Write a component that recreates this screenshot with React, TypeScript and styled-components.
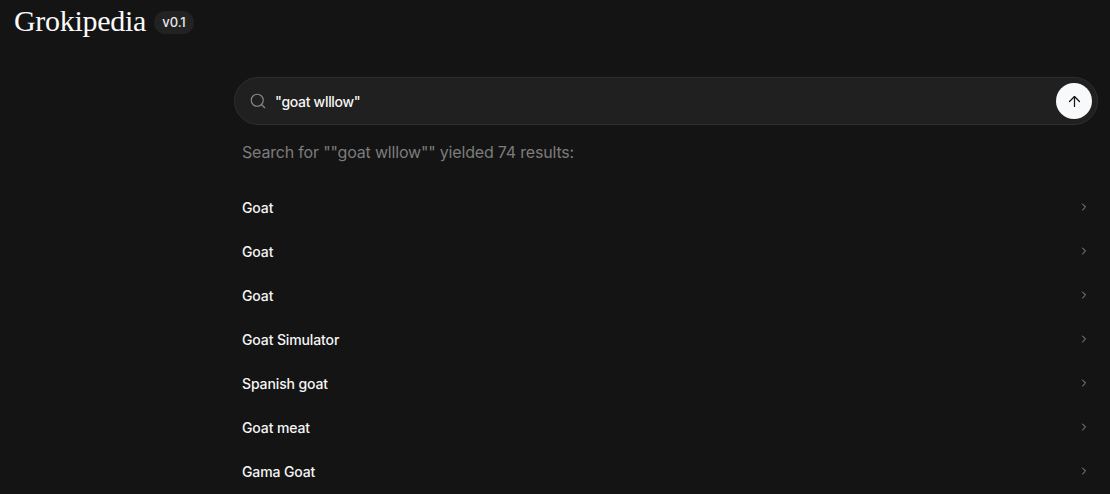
import React from "react";
import styled, { createGlobalStyle } from "styled-components";
import { ArrowUp, ChevronRight, Search } from "lucide-react";

const Global = createGlobalStyle`
  html, body { margin: 0; padding: 0; background: #141414; height: 494px; overflow: hidden; }
  * { box-sizing: border-box; }
`;

const Page = styled.div`
  width: 1110px;
  height: 494px;
  overflow: hidden;
  background: #141414;
  color: #fafafa;
  font-family: Inter, "Liberation Sans", sans-serif;
`;

const Header = styled.header`
  display: flex;
  align-items: center;
  gap: 8px;
  height: 44px;
  padding-left: 14px;
`;

const Logo = styled.h1`
  margin: -2px 0 0;
  font-family: "Liberation Serif", serif;
  font-weight: 400;
  font-size: 30px;
  letter-spacing: -0.3px;
  line-height: 44px;
  color: #fafafa;
`;

const Version = styled.span`
  display: flex;
  align-items: center;
  justify-content: center;
  width: 40px;
  height: 23px;
  border-radius: 12px;
  background: #222222;
  font-size: 13px;
  font-weight: 500;
  letter-spacing: -0.1px;
  color: #e8e8e8;
`;

const Main = styled.main`
  width: 864px;
  margin: 33px 0 0 234px;
`;

const SearchBar = styled.div`
  display: flex;
  align-items: center;
  height: 48px;
  padding: 0 5px 0 14px;
  border: 1px solid #2e2e2e;
  border-radius: 24px;
  background: #202020;
`;

const SearchIcon = styled(Search)`
  flex: none;
  color: #8a8a8a;
`;

const Query = styled.span`
  flex: 1;
  margin-left: 8px;
  font-size: 14px;
  font-weight: 500;
  letter-spacing: -0.3px;
  color: #f5f5f5;
`;

const Submit = styled.button`
  display: flex;
  align-items: center;
  justify-content: center;
  width: 36px;
  height: 36px;
  padding: 0;
  border: none;
  border-radius: 50%;
  background: #f8f9fb;
  color: #141414;
`;

const Summary = styled.p`
  margin: 15px 0 0 8px;
  font-size: 16px;
  letter-spacing: -0.18px;
  line-height: 24px;
  color: #7c7c7c;
`;

const Results = styled.ul`
  list-style: none;
  margin: 21px 0 0;
  padding: 0;
`;

const Result = styled.li`
  display: flex;
  align-items: center;
  justify-content: space-between;
  height: 44px;
  padding: 0 8px;
  font-size: 14px;
  font-weight: 500;
  letter-spacing: -0.12px;
  color: #f5f5f5;
`;

const Chevron = styled(ChevronRight)`
  flex: none;
  color: #969696;
`;

const titles = ["Goat", "Goat", "Goat", "Goat Simulator", "Spanish goat", "Goat meat", "Gama Goat"];

export default function App() {
  return (
    <Page>
      <Global />
      <Header>
        <Logo>Grokipedia</Logo>
        <Version>v0.1</Version>
      </Header>
      <Main>
        <SearchBar>
          <SearchIcon size={18} strokeWidth={1.5} />
          <Query>"goat wlllow"</Query>
          <Submit aria-label="Search">
            <ArrowUp size={17} strokeWidth={1.75} />
          </Submit>
        </SearchBar>
        <Summary>Search for ""goat wlllow"" yielded 74 results:</Summary>
        <Results>
          {titles.map((title, i) => (
            <Result key={i}>
              {title}
              <Chevron size={12} strokeWidth={2} />
            </Result>
          ))}
        </Results>
      </Main>
    </Page>
  );
}
